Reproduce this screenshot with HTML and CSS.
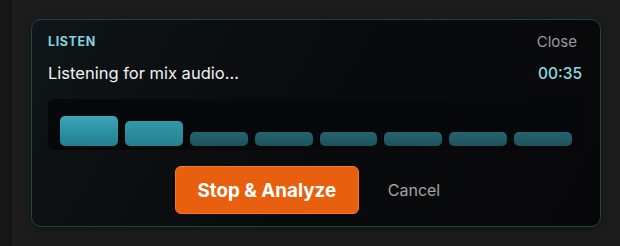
FILE: index.html
```html
<!DOCTYPE html>
<html lang="en">
<head>
<meta charset="utf-8">
<title>Listen</title>
<link rel="stylesheet" href="styles.css">
</head>
<body>
<div class="page">
  <div class="rail"></div>
  <div class="main">
    <section class="card">
      <div class="head">
        <span class="label">LISTEN</span>
        <button class="close">Close</button>
      </div>
      <div class="status">
        <span class="msg">Listening for mix audio...</span>
        <span class="time">00:35</span>
      </div>
      <div class="meter">
        <div class="bar hi" style="height:30px"></div>
        <div class="bar hi dim" style="height:25px"></div>
        <div class="bar lo"></div>
        <div class="bar lo"></div>
        <div class="bar lo"></div>
        <div class="bar lo"></div>
        <div class="bar lo"></div>
        <div class="bar lo"></div>
      </div>
      <div class="actions">
        <button class="primary">Stop &amp; Analyze</button>
        <button class="cancel">Cancel</button>
      </div>
    </section>
  </div>
</div>
</body>
</html>
```

FILE: styles.css
```css
* { box-sizing: border-box; }
html, body { margin: 0; height: 100%; }
body {
  background: #1c1c1d;
  font-family: Inter, "Noto Sans", sans-serif;
  overflow: hidden;
}
.page {
  display: flex;
  height: 246px;
}
.rail {
  width: 11px;
  flex: none;
  background: #171717;
  border-right: 1px solid #101010;
}
.main {
  flex: 1;
  padding: 19px 19px 0 20px;
}
.card {
  height: 208px;
  border: 1px solid #1f4348;
  border-radius: 10px;
  background: linear-gradient(120deg, #0f1518 0%, #0a0b0d 45%, #08080a 100%);
  padding: 12px 17px 12px 16px;
  display: flex;
  flex-direction: column;
  box-shadow: 0 2px 6px rgba(0,0,0,0.35);
}
.head {
  display: flex;
  justify-content: space-between;
  align-items: center;
  height: 18px;
}
.label {
  font-size: 12.5px;
  font-weight: 700;
  letter-spacing: 0.6px;
  color: #7ed3df;
}
.close {
  background: none;
  border: 0;
  padding: 0 6px 0 0;
  font-family: inherit;
  font-size: 15px;
  color: #9a9a9c;
}
.status {
  margin-top: 13px;
  display: flex;
  justify-content: space-between;
  align-items: baseline;
  line-height: 20px;
}
.msg {
  font-size: 16.5px;
  color: #f2f2f2;
}
.time {
  font-size: 15.5px;
  font-weight: 500;
  color: #8fd9e4;
  padding-right: 1px;
}
.meter {
  margin-top: 15px;
  height: 52px;
  background: #070809;
  border-radius: 6px;
  display: flex;
  align-items: flex-end;
  gap: 7px;
  padding: 0 11px 4px 12px;
}
.bar {
  flex: 1;
  border-radius: 5px;
}
.bar.hi {
  background: linear-gradient(180deg, #3ba7b8 0%, #2a8e9f 60%, #237f8f 100%);
}
.bar.hi.dim {
  background: linear-gradient(180deg, #3399aa 0%, #267f8f 100%);
}
.bar.lo {
  height: 14px;
  background: linear-gradient(180deg, #256470 0%, #1d525c 100%);
}
.actions {
  margin-top: 16px;
  display: flex;
  justify-content: center;
  align-items: center;
  gap: 13px;
}
.primary {
  height: 48px;
  width: 184px;
  border: 1px solid #f27a2e;
  border-radius: 6px;
  background: #e8600e;
  color: #fff;
  font-family: inherit;
  font-size: 18.8px;
  font-weight: 700;
}
.cancel {
  background: none;
  border: 0;
  padding: 0 16px;
  height: 40px;
  font-family: inherit;
  font-size: 16px;
  color: #a3a3a5;
}
```
